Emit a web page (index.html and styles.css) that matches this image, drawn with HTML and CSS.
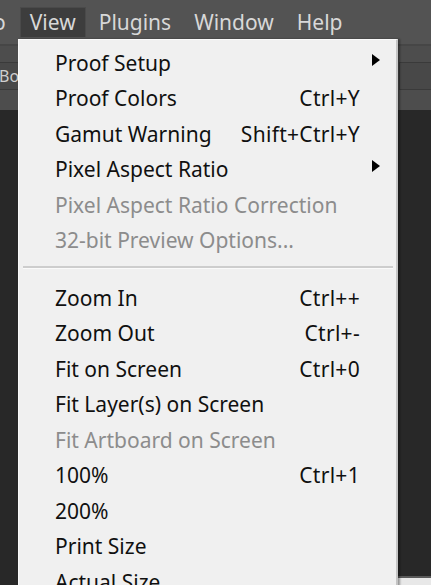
FILE: index.html
```html
<!DOCTYPE html>
<html>
<head>
<meta charset="utf-8">
<link rel="stylesheet" href="styles.css">
</head>
<body>
<div class="app">
  <div class="menubar">
    <span class="mb-item cut">o</span>
    <span class="mb-item active">View</span>
    <span class="mb-item">Plugins</span>
    <span class="mb-item">Window</span>
    <span class="mb-item">Help</span>
  </div>
  <div class="toolbar">
    <div class="field left-field">Bo</div>
    <div class="spacer"></div>
    <div class="field right-field"></div>
  </div>
  <div class="canvas">
    <div class="bottom-strip"></div>
  </div>

  <div class="dropdown">
    <div class="row"><span class="label">Proof Setup</span><span class="sc"></span><span class="arrow"><svg width="8" height="12" viewBox="0 0 8 12"><path d="M0 0 L8 6 L0 12 Z" fill="#000"/></svg></span></div>
    <div class="row"><span class="label">Proof Colors</span><span class="sc">Ctrl+Y</span><span class="arrow"></span></div>
    <div class="row"><span class="label">Gamut Warning</span><span class="sc">Shift+Ctrl+Y</span><span class="arrow"></span></div>
    <div class="row"><span class="label">Pixel Aspect Ratio</span><span class="sc"></span><span class="arrow"><svg width="8" height="12" viewBox="0 0 8 12"><path d="M0 0 L8 6 L0 12 Z" fill="#000"/></svg></span></div>
    <div class="row disabled"><span class="label">Pixel Aspect Ratio Correction</span><span class="sc"></span><span class="arrow"></span></div>
    <div class="row disabled"><span class="label">32-bit Preview Options...</span><span class="sc"></span><span class="arrow"></span></div>
    <div class="sep"></div>
    <div class="row"><span class="label">Zoom In</span><span class="sc">Ctrl++</span><span class="arrow"></span></div>
    <div class="row"><span class="label">Zoom Out</span><span class="sc">Ctrl+-</span><span class="arrow"></span></div>
    <div class="row"><span class="label">Fit on Screen</span><span class="sc">Ctrl+0</span><span class="arrow"></span></div>
    <div class="row"><span class="label">Fit Layer(s) on Screen</span><span class="sc"></span><span class="arrow"></span></div>
    <div class="row disabled"><span class="label">Fit Artboard on Screen</span><span class="sc"></span><span class="arrow"></span></div>
    <div class="row"><span class="label">100%</span><span class="sc">Ctrl+1</span><span class="arrow"></span></div>
    <div class="row"><span class="label">200%</span><span class="sc"></span><span class="arrow"></span></div>
    <div class="row"><span class="label">Print Size</span><span class="sc"></span><span class="arrow"></span></div>
    <div class="row"><span class="label">Actual Size</span><span class="sc"></span><span class="arrow"></span></div>
  </div>
</div>
</body>
</html>
```
FILE: styles.css
```css
html, body {
  margin: 0;
  padding: 0;
}
body {
  width: 431px;
  height: 585px;
  overflow: hidden;
  background: #282828;
  font-family: "Noto Sans", "Open Sans", sans-serif;
}
.app {
  position: relative;
  width: 431px;
  height: 585px;
  display: flex;
  flex-direction: column;
}
.menubar {
  height: 44px;
  background: #535353;
  display: flex;
  align-items: center;
  color: #d8d8d8;
  font-size: 21px;
  flex-shrink: 0;
}
.mb-item {
  padding: 0 11px;
  height: 29px;
  line-height: 29px;
  margin-right: 1px;
}
.mb-item.cut {
  margin-left: -7px;
  padding: 0 13px 0 0;
}
.mb-item.active {
  background: #3d3d3d;
  border: 1px solid #4a4a4a;
  border-bottom: none;
  padding: 0 9px;
  margin-right: 2px;
}
.toolbar {
  height: 64px;
  background: #4d4d4d;
  border-top: 2px solid #464646;
  display: flex;
  align-items: center;
  flex-shrink: 0;
}
.field {
  height: 26px;
  background: #484848;
  border: 1px solid #3a3a3a;
  color: #cfcfcf;
  font-size: 16px;
  line-height: 26px;
}
.left-field {
  width: 30px;
  margin-left: -12px;
  padding-left: 10px;
  overflow: hidden;
  margin-top: -4px;
}
.spacer { flex: 1; }
.right-field {
  width: 40px;
  margin-right: -10px;
  margin-top: -4px;
}
.canvas {
  flex: 1;
  background: #282828;
  position: relative;
}
.bottom-strip {
  position: absolute;
  left: 397px;
  right: 0;
  bottom: 0;
  height: 7px;
  background: #e8e8e8;
  border-top: 2px solid #5a5a5a;
}
.dropdown {
  position: absolute;
  left: 18px;
  top: 39px;
  width: 377px;
  height: 560px;
  background: #f0f0f0;
  border-left: 1px solid #fafafa;
  border-top: 1px solid #fafafa;
  border-right: 2px solid #c4c4c4;
  padding-top: 5px;
  box-shadow: 2px 0 2px rgba(0,0,0,0.35);
}
.row {
  display: grid;
  grid-template-columns: 1fr auto 36px;
  align-items: center;
  height: 35.5px;
  padding-left: 36px;
  font-size: 21px;
  color: #101010;
}
.row.disabled {
  color: #8c8c8c;
}
.sc {
  text-align: right;
  letter-spacing: 0.3px;
}
.arrow {
  display: flex;
  align-items: center;
  padding-left: 12px;
  margin-top: -6px;
}
.sep {
  margin: 8px 3px 11px 4px;
  height: 2px;
  background: #cdcdcd;
  border-bottom: 1px solid #fafafa;
}
```
